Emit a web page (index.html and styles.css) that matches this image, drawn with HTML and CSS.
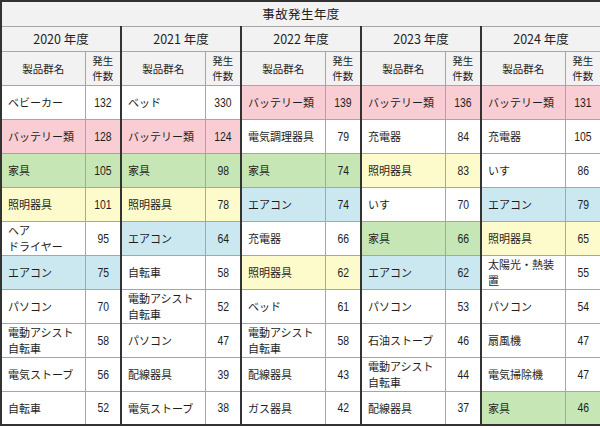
FILE: index.html
```html
<!DOCTYPE html>
<html lang="ja">
<head>
<meta charset="utf-8">
<link rel="stylesheet" href="styles.css">
</head>
<body>
<table class="grid">
  <colgroup>
    <col class="c-name"><col class="c-num">
    <col class="c-name"><col class="c-num">
    <col class="c-name"><col class="c-num">
    <col class="c-name"><col class="c-num">
    <col class="c-name"><col class="c-num">
  </colgroup>
  <thead>
    <tr class="r-title"><th colspan="10" class="title">事故発生年度</th></tr>
    <tr class="r-year">
      <th colspan="2" class="year g">2020 年度</th>
      <th colspan="2" class="year g">2021 年度</th>
      <th colspan="2" class="year g">2022 年度</th>
      <th colspan="2" class="year g">2023 年度</th>
      <th colspan="2" class="year g">2024 年度</th>
    </tr>
    <tr class="r-sub">
      <th class="sub g">製品群名</th><th class="sub">発生<br>件数</th>
      <th class="sub g">製品群名</th><th class="sub">発生<br>件数</th>
      <th class="sub g">製品群名</th><th class="sub">発生<br>件数</th>
      <th class="sub g">製品群名</th><th class="sub">発生<br>件数</th>
      <th class="sub g">製品群名</th><th class="sub">発生<br>件数</th>
    </tr>
  </thead>
  <tbody>
    <tr>
      <td class="nm g">ベビーカー</td><td class="num"><span class="n">132</span></td>
      <td class="nm g">ベッド</td><td class="num"><span class="n">330</span></td>
      <td class="nm g pink">バッテリー類</td><td class="num pink"><span class="n">139</span></td>
      <td class="nm g pink">バッテリー類</td><td class="num pink"><span class="n">136</span></td>
      <td class="nm g pink">バッテリー類</td><td class="num pink"><span class="n">131</span></td>
    </tr>
    <tr>
      <td class="nm g pink">バッテリー類</td><td class="num pink"><span class="n">128</span></td>
      <td class="nm g pink">バッテリー類</td><td class="num pink"><span class="n">124</span></td>
      <td class="nm g">電気調理器具</td><td class="num"><span class="n">79</span></td>
      <td class="nm g">充電器</td><td class="num"><span class="n">84</span></td>
      <td class="nm g">充電器</td><td class="num"><span class="n">105</span></td>
    </tr>
    <tr>
      <td class="nm g green">家具</td><td class="num green"><span class="n">105</span></td>
      <td class="nm g green">家具</td><td class="num green"><span class="n">98</span></td>
      <td class="nm g green">家具</td><td class="num green"><span class="n">74</span></td>
      <td class="nm g yellow">照明器具</td><td class="num yellow"><span class="n">83</span></td>
      <td class="nm g">いす</td><td class="num"><span class="n">86</span></td>
    </tr>
    <tr>
      <td class="nm g yellow">照明器具</td><td class="num yellow"><span class="n">101</span></td>
      <td class="nm g yellow">照明器具</td><td class="num yellow"><span class="n">78</span></td>
      <td class="nm g blue">エアコン</td><td class="num blue"><span class="n">74</span></td>
      <td class="nm g">いす</td><td class="num"><span class="n">70</span></td>
      <td class="nm g blue">エアコン</td><td class="num blue"><span class="n">79</span></td>
    </tr>
    <tr>
      <td class="nm g">ヘア<br>ドライヤー</td><td class="num"><span class="n">95</span></td>
      <td class="nm g blue">エアコン</td><td class="num blue"><span class="n">64</span></td>
      <td class="nm g">充電器</td><td class="num"><span class="n">66</span></td>
      <td class="nm g green">家具</td><td class="num green"><span class="n">66</span></td>
      <td class="nm g yellow">照明器具</td><td class="num yellow"><span class="n">65</span></td>
    </tr>
    <tr>
      <td class="nm g blue">エアコン</td><td class="num blue"><span class="n">75</span></td>
      <td class="nm g">自転車</td><td class="num"><span class="n">58</span></td>
      <td class="nm g yellow">照明器具</td><td class="num yellow"><span class="n">62</span></td>
      <td class="nm g blue">エアコン</td><td class="num blue"><span class="n">62</span></td>
      <td class="nm g">太陽光・熱装<br>置</td><td class="num"><span class="n">55</span></td>
    </tr>
    <tr>
      <td class="nm g">パソコン</td><td class="num"><span class="n">70</span></td>
      <td class="nm g">電動アシスト<br>自転車</td><td class="num"><span class="n">52</span></td>
      <td class="nm g">ベッド</td><td class="num"><span class="n">61</span></td>
      <td class="nm g">パソコン</td><td class="num"><span class="n">53</span></td>
      <td class="nm g">パソコン</td><td class="num"><span class="n">54</span></td>
    </tr>
    <tr>
      <td class="nm g">電動アシスト<br>自転車</td><td class="num"><span class="n">58</span></td>
      <td class="nm g">パソコン</td><td class="num"><span class="n">47</span></td>
      <td class="nm g">電動アシスト<br>自転車</td><td class="num"><span class="n">58</span></td>
      <td class="nm g">石油ストーブ</td><td class="num"><span class="n">46</span></td>
      <td class="nm g">扇風機</td><td class="num"><span class="n">47</span></td>
    </tr>
    <tr>
      <td class="nm g">電気ストーブ</td><td class="num"><span class="n">56</span></td>
      <td class="nm g">配線器具</td><td class="num"><span class="n">39</span></td>
      <td class="nm g">配線器具</td><td class="num"><span class="n">43</span></td>
      <td class="nm g">電動アシスト<br>自転車</td><td class="num"><span class="n">44</span></td>
      <td class="nm g">電気掃除機</td><td class="num"><span class="n">47</span></td>
    </tr>
    <tr>
      <td class="nm g">自転車</td><td class="num"><span class="n">52</span></td>
      <td class="nm g">電気ストーブ</td><td class="num"><span class="n">38</span></td>
      <td class="nm g">ガス器具</td><td class="num"><span class="n">42</span></td>
      <td class="nm g">配線器具</td><td class="num"><span class="n">37</span></td>
      <td class="nm g green">家具</td><td class="num green"><span class="n">46</span></td>
    </tr>
  </tbody>
</table>
</body>
</html>
```

FILE: styles.css
```css
html, body {
  margin: 0;
  padding: 0;
  background: #ffffff;
}

body {
  font-family: "Noto Sans CJK JP", "Noto Sans", sans-serif;
  color: #1e1e1e;
}

.grid {
  width: 599px;
  table-layout: fixed;
  border-collapse: collapse;
  border: 2px solid #333333;
}

.c-name { width: 84px; }
.c-num { width: 36px; }

.grid th,
.grid td {
  border: 1px solid #a6a6a6;
  padding: 0;
  font-weight: normal;
  overflow: hidden;
  white-space: nowrap;
}

.grid .g {
  border-left: 2px solid #333333;
}

.r-title { height: 25px; }
.r-year { height: 25px; }
.r-sub { height: 34px; }
.grid tbody tr { height: 34px; }

.grid .title {
  background: #f2f2f2;
  font-size: 12.5px;
  text-align: center;
  letter-spacing: 0.4px;
}

.grid .year {
  background: #f2f2f2;
  font-size: 12.5px;
  text-align: center;
}

.grid .sub {
  background: #f2f2f2;
  font-size: 10.5px;
  line-height: 15px;
  text-align: center;
}

.grid .nm {
  font-size: 11px;
  line-height: 16px;
  text-align: left;
  padding-left: 6px;
}

.grid .num {
  font-family: "Liberation Sans", Arial, sans-serif;
  font-size: 13px;
  text-align: center;
}

.n {
  display: inline-block;
  transform: scaleX(0.8);
}

.grid .pink { background: #f9cdd4; }
.grid .green { background: #c6e6b5; }
.grid .yellow { background: #fdfbcc; }
.grid .blue { background: #cbe8f1; }
```
